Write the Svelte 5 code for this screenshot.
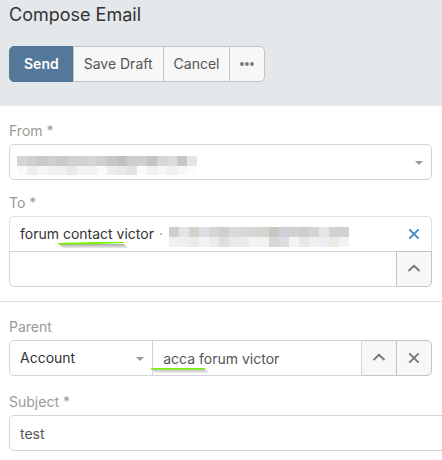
<script lang="ts">
  let to = $state('');
  let parentType = $state('Account');
  let parentName = $state('acca forum victor');
  let subject = $state('test');

  // obscured addresses: two rows of grey cells each
  const fromCells = [
    ['#d5d5d5', '#cfcfcf', '#c9c9c9', '#cfcfcf', '#cacaca', '#d0d0d0', '#d0d0d0', '#d4d4d4', '#cfcfcf', '#c7c7c7', '#c1c1c1', '#cdcdcd', '#cfcfcf', '#c4c4c4', '#d5d5d5', '#dcdcdc', '#c7c7c7', '#e5e5e5'],
    ['#f9f9f9', '#ededed', '#f5f5f5', '#f1f1f1', '#f0f0f0', '#e9e9e9', '#f4f4f4', '#f2f2f2', '#fafafa', '#ececec', '#e9e9e9', '#e3e3e3', '#fbfbfb', '#f0f0f0', '#f6f6f6', '#f0f0f0', '#f7f7f7', '#fbfbfb'],
  ];
  const toCells = [
    ['#d0cdce', '#e1e5e3', '#d3d1cc', '#dcdfe4', '#d5d4d3', '#cdcfd1', '#d9d9d9', '#d7d8da', '#d6d6d6', '#d6d2cd', '#c4c7c4', '#cccfd5', '#d3d1d0', '#cbcdd1', '#d3d3d4', '#e5e5e3', '#d6d0cc', '#ced2d6'],
    ['#f0f0f0', '#eeeeee', '#eaeae8', '#f1f3f6', '#ebebeb', '#dfdfdf', '#eaeaea', '#e9ebee', '#f3f3f3', '#f3f3f1', '#d8d8d8', '#dbdde0', '#f4f4f4', '#e7e7e7', '#f0efed', '#eceef1', '#ebe8e5', '#f1f3f6'],
  ];
</script>

{#snippet mosaic(rows: string[][])}
  <span class="mosaic" aria-hidden="true">
    {#each rows as row}
      {#each row as color}
        <i style="background:{color}"></i>
      {/each}
    {/each}
  </span>
{/snippet}

{#snippet caret()}
  <svg class="caret" width="8" height="4" viewBox="0 0 8 4" aria-hidden="true">
    <path d="M0 0h8L4 4z" fill="#999" />
  </svg>
{/snippet}

{#snippet angleUp()}
  <svg width="14" height="14" viewBox="0 0 14 14" aria-hidden="true">
    <path d="M1.5 9 7 3.7 12.5 9" fill="none" stroke="currentColor" stroke-width="1.9" />
  </svg>
{/snippet}

{#snippet cross()}
  <svg width="14" height="14" viewBox="0 0 14 14" aria-hidden="true">
    <path d="M2.3 2.3l9.4 9.4M11.7 2.3l-9.4 9.4" fill="none" stroke="currentColor" stroke-width="1.9" />
  </svg>
{/snippet}

<form class="compose" onsubmit={(e) => e.preventDefault()}>
  <header>
    <h1>Compose Email</h1>
    <div class="btn-group">
      <button class="btn primary" type="submit">Send</button>
      <button class="btn" type="button">Save Draft</button>
      <button class="btn" type="button">Cancel</button>
      <button class="btn icon" type="button" aria-label="More actions">
        <svg width="14" height="4" viewBox="0 0 14 4" aria-hidden="true">
          <circle cx="2" cy="2" r="1.9" fill="#777" />
          <circle cx="7" cy="2" r="1.9" fill="#777" />
          <circle cx="12" cy="2" r="1.9" fill="#777" />
        </svg>
      </button>
    </div>
  </header>

  <section class="addresses">
    <div class="field">
      <label for="from">From *</label>
      <div class="select-box">
        <select id="from" class="control"><option></option></select>
        <div class="obscured">{@render mosaic(fromCells)}</div>
        {@render caret()}
      </div>
    </div>

    <div class="field">
      <label for="to">To *</label>
      <div class="recipient">
        <span class="recipient-name">
          forum contact victor
          <svg class="marker" width="72" height="8" viewBox="0 0 72 8" aria-hidden="true">
            <defs>
              <linearGradient id="shade-to" x1="0" y1="0" x2="0" y2="1">
                <stop offset="0" stop-color="#a8a8a8" />
                <stop offset="1" stop-color="#ededed" />
              </linearGradient>
            </defs>
            <path d="M1 3h65l4 4H5z" fill="url(#shade-to)" />
            <path d="M0 2 38 1 66 1v1L38 3 0 3.5z" fill="#76f500" />
          </svg>
        </span>
        <span class="dot">·</span>
        {@render mosaic(toCells)}
        <button class="remove" type="button" aria-label="Remove recipient">{@render cross()}</button>
      </div>
      <div class="input-group below">
        <input id="to" class="control" bind:value={to} />
        <button class="btn icon" type="button" aria-label="Select contact">{@render angleUp()}</button>
      </div>
    </div>
  </section>

  <section class="details">
    <div class="field">
      <label for="parent">Parent</label>
      <div class="input-group">
        <div class="select-box parent-type">
          <select class="control" aria-label="Parent type" bind:value={parentType}>
            <option>Account</option>
          </select>
          {@render caret()}
        </div>
        <div class="parent-name">
          <input id="parent" class="control" bind:value={parentName} />
          <svg class="marker" width="60" height="8" viewBox="0 0 60 8" aria-hidden="true">
            <defs>
              <linearGradient id="shade-parent" x1="0" y1="0" x2="0" y2="1">
                <stop offset="0" stop-color="#b4b4b4" />
                <stop offset="1" stop-color="#f2f2f2" />
              </linearGradient>
            </defs>
            <path d="M1 2h53l4 4H4z" fill="url(#shade-parent)" />
            <path d="M0 1h54v1.5H0z" fill="#76f500" />
          </svg>
        </div>
        <button class="btn icon" type="button" aria-label="Select parent">{@render angleUp()}</button>
        <button class="btn icon" type="button" aria-label="Clear parent">{@render cross()}</button>
      </div>
    </div>

    <div class="field wide">
      <label for="subject">Subject *</label>
      <input id="subject" class="control" bind:value={subject} />
    </div>
  </section>
</form>

<style>
  :global(body) {
    margin: 0;
    background: #fff;
  }

  .compose, .compose * {
    box-sizing: border-box;
  }

  .compose {
    overflow: hidden;
    font-family: Inter, "Liberation Sans", sans-serif;
    font-size: 14px;
    line-height: 20px;
    color: #333;
  }

  header {
    padding: 4px 10px 24px 9px;
    background: #e4e8eb;
  }

  h1 {
    margin: 0 0 20px;
    font-size: 18px;
    font-weight: 400;
    line-height: 22px;
  }

  .btn-group, .input-group {
    display: flex;
  }

  .btn {
    height: 36px;
    margin: 0 0 0 -1px;
    padding: 0 10px;
    border: 1px solid #c4c4c4;
    background: #f7f7f7;
    color: #555;
    font: inherit;
    cursor: pointer;
  }

  .btn:first-child {
    margin-left: 0;
    border-radius: 5px 0 0 5px;
  }

  .btn:last-child {
    border-radius: 0 5px 5px 0;
  }

  .btn.primary {
    padding: 0 14px;
    border-color: #537899;
    background: #537899;
    color: #fff;
    font-weight: 600;
  }

  .btn svg, .remove svg {
    display: block;
    margin: auto;
  }

  .btn.icon {
    flex: none;
    width: 36px;
    padding: 0;
    color: #777;
  }

  .addresses {
    padding: 15px 10px 14px 9px;
    border-bottom: 1px solid #dcdcdc;
  }

  .details {
    padding: 15px 10px 8px 9px;
  }

  .field + .field {
    margin-top: 13px;
  }

  .details .field + .field {
    margin-top: 16px;
  }

  label {
    display: block;
    margin-bottom: 3px;
    color: #999;
  }

  .control {
    display: block;
    width: 100%;
    height: 36px;
    margin: 0;
    padding: 0 10px;
    border: 1px solid #d1d5d6;
    border-radius: 5px;
    outline: 0;
    background: #fff;
    color: #555;
    font: inherit;
  }

  select.control {
    appearance: none;
    color: #333;
  }

  .select-box {
    position: relative;
  }

  .caret {
    position: absolute;
    top: 17px;
    right: 9px;
    pointer-events: none;
  }

  .obscured {
    position: absolute;
    top: 12px;
    left: 8px;
    height: 19px;
    overflow: hidden;
    pointer-events: none;
  }

  .mosaic {
    display: grid;
    grid-template-columns: repeat(18, 10px);
    grid-auto-rows: 10px;
  }

  .recipient {
    display: flex;
    align-items: center;
    height: 36px;
    padding: 0 10px;
    border: 1px solid #e0e0e0;
    border-radius: 5px 5px 0 0;
  }

  .recipient .mosaic {
    margin-top: 6px;
  }

  .recipient-name {
    position: relative;
  }

  .recipient-name .marker {
    position: absolute;
    top: 17px;
    left: 38px;
  }

  .dot {
    width: 15px;
    padding-left: 5px;
    color: #999;
  }

  .remove {
    margin-left: auto;
    padding: 0;
    border: 0;
    background: none;
    color: #4a86c5;
    cursor: pointer;
  }

  .input-group.below {
    margin-top: -1px;
  }

  .input-group.below .control {
    border-radius: 0 0 0 5px;
  }

  .input-group.below .btn {
    border-radius: 0 0 5px;
  }

  .parent-type {
    flex: 11;
  }

  .parent-type .control {
    border-radius: 5px 0 0 5px;
  }

  .parent-name {
    position: relative;
    flex: 16;
    margin-left: -1px;
  }

  .parent-name .control {
    border-radius: 0;
  }

  .parent-name .marker {
    position: absolute;
    top: 27px;
    left: -1px;
  }

  /* the subject line runs past the visible edge of the panel */
  .field.wide {
    margin-right: -30px;
  }
</style>
